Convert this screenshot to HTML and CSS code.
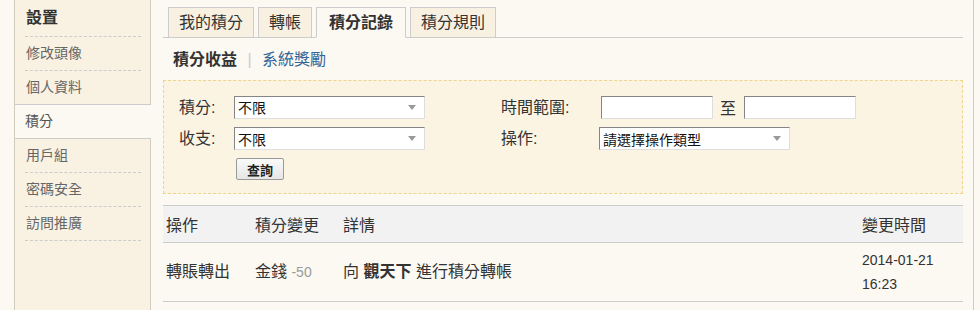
FILE: index.html
```html
<!DOCTYPE html>
<html>
<head>
    <meta charset="utf-8">
    <title>積分記錄</title>
    <link rel="stylesheet" href="styles.css">
</head>
<body>
    <div class="wrap">
        <div class="side">
            <div class="side-title">設置</div>
            <ul class="side-menu">
                <li>修改頭像</li>
                <li>個人資料</li>
                <li class="active">積分</li>
                <li>用戶組</li>
                <li>密碼安全</li>
                <li>訪問推廣</li>
            </ul>
        </div>

        <div class="main">
            <ul class="tabs">
                <li>我的積分</li>
                <li>轉帳</li>
                <li class="active">積分記錄</li>
                <li>積分規則</li>
            </ul>

            <div class="subnav">
                <b>積分收益</b>
                <span class="pipe">|</span>
                <a href="#">系統獎勵</a>
            </div>

            <div class="filter">
                <div class="filter-grid">
                    <span class="label">積分:</span>
                    <div class="select"><span>不限</span><i class="arrow"></i></div>
                    <span class="label">時間範圍:</span>
                    <div class="range">
                        <div class="input"></div>
                        <span class="to">至</span>
                        <div class="input"></div>
                    </div>

                    <span class="label">收支:</span>
                    <div class="select"><span>不限</span><i class="arrow"></i></div>
                    <span class="label">操作:</span>
                    <div class="select op"><span>請選擇操作類型</span><i class="arrow"></i></div>

                    <span></span>
                    <div><button class="btn">查詢</button></div>
                </div>
            </div>

            <table class="log">
                <thead>
                    <tr>
                        <th class="c-op">操作</th>
                        <th class="c-chg">積分變更</th>
                        <th>詳情</th>
                        <th class="c-time">變更時間</th>
                    </tr>
                </thead>
                <tbody>
                    <tr>
                        <td>轉賬轉出</td>
                        <td>金錢 <span class="num">-50</span></td>
                        <td>向 <b>觀天下</b> 進行積分轉帳</td>
                        <td class="date">2014-01-21<br>16:23</td>
                    </tr>
                </tbody>
            </table>
        </div>
    </div>
</body>
</html>
```

FILE: styles.css
```css
body {
    margin: 0;
    background: #fcf9f2;
    color: #333;
    font-family: "Liberation Sans", "Noto Sans CJK TC", sans-serif;
    font-size: 14px;
}

ul {
    margin: 0;
    padding: 0;
    list-style: none;
}

.wrap {
    display: flex;
    min-height: 100vh;
    margin-left: 14px;
    width: 960px;
}

/* sidebar */
.side {
    width: 137px;
    box-sizing: border-box;
    background: #f9f2e3;
    border-left: 1px solid #d2ccbf;
    border-right: 1px solid #d2ccbf;
}

.side-title {
    height: 36px;
    line-height: 36px;
    margin: 0 9px 0 10px;
    padding-left: 1px;
    border-bottom: 1px dashed #ccc;
    font-size: 16px;
    font-weight: bold;
    color: #333;
}

.side-menu li {
    height: 33px;
    line-height: 33px;
    margin: 0 9px 0 10px;
    padding-left: 1px;
    border-bottom: 1px dashed #ccc;
    color: #666;
}

.side-menu li.active {
    margin: -1px -1px 0 0;
    padding-left: 10px;
    border-top: 1px solid #ccc;
    border-bottom: 1px solid #ccc;
    background: #fcf9f2;
    color: #555;
}

/* main */
.main {
    flex: 1;
    padding: 7px 10px 0 12px;
    border-right: 1px solid #ccc;
}

.tabs {
    display: flex;
    gap: 4px;
    padding-left: 5px;
    border-bottom: 1px solid #ccc;
}

.tabs li {
    height: 29px;
    line-height: 29px;
    margin-bottom: -1px;
    padding: 0 10px;
    border: 1px solid #ccc;
    background: #f8f1e1;
    font-size: 16px;
}

.tabs li.active {
    padding: 0 12px;
    border-bottom-color: #fcf9f2;
    background: #fcf9f2;
    font-weight: bold;
}

.subnav {
    height: 20px;
    line-height: 20px;
    margin: 12px 0 10px;
    padding-left: 10px;
    font-size: 16px;
}

.subnav .pipe {
    margin: 0 6px;
    color: #ccc;
}

.subnav a {
    color: #336699;
    text-decoration: none;
}

/* filter */
.filter {
    border: 1px dashed #efd48a;
    background: #fcf4e3;
    padding: 14px 0 13px 15px;
}

.filter-grid {
    display: grid;
    grid-template-columns: 55px 267px 100px auto;
    row-gap: 8px;
    align-items: center;
}

.label {
    font-size: 16px;
    line-height: 23px;
}

.select,
.input {
    height: 21px;
    box-sizing: content-box;
    background: #fff;
    border: 1px solid;
    border-color: #858585 #dedede #dedede #858585;
}

.select {
    width: 178px;
    display: flex;
    align-items: center;
    justify-content: space-between;
    padding: 0 8px 0 3px;
    font-size: 14px;
    color: #111;
}

.select.op {
    margin-left: -2px;
}

.arrow {
    width: 0;
    height: 0;
    border-top: 5px solid #999;
    border-left: 4px solid transparent;
    border-right: 4px solid transparent;
}

.range {
    display: flex;
    align-items: center;
}

.input {
    width: 110px;
}

.to {
    margin: 0 8px 0 7px;
    font-size: 16px;
}

.btn {
    margin-left: 2px;
    width: 48px;
    height: 22px;
    padding: 0;
    border: 1px solid #999;
    border-radius: 2px;
    background: linear-gradient(#fafafa, #e6e6e6);
    font-family: inherit;
    font-size: 13px;
    font-weight: bold;
    color: #222;
}

/* table */
.log {
    width: 800px;
    margin-top: 11px;
    border-collapse: collapse;
    font-size: 16px;
}

.log th {
    height: 36px;
    padding: 0 0 0 3px;
    background: #f2f2f2;
    border-top: 1px solid #ccc;
    border-bottom: 1px solid #ccc;
    font-weight: normal;
    text-align: left;
}

.log td {
    padding: 5px 0 5px 3px;
    line-height: 24px;
    border-bottom: 1px solid #ccc;
}

.c-op { width: 86px; }
.c-chg { width: 85px; }
.c-time { width: 101px; }

.log .num {
    color: #999;
    font-size: 14px;
}

.log .date {
    font-size: 14px;
}
```
